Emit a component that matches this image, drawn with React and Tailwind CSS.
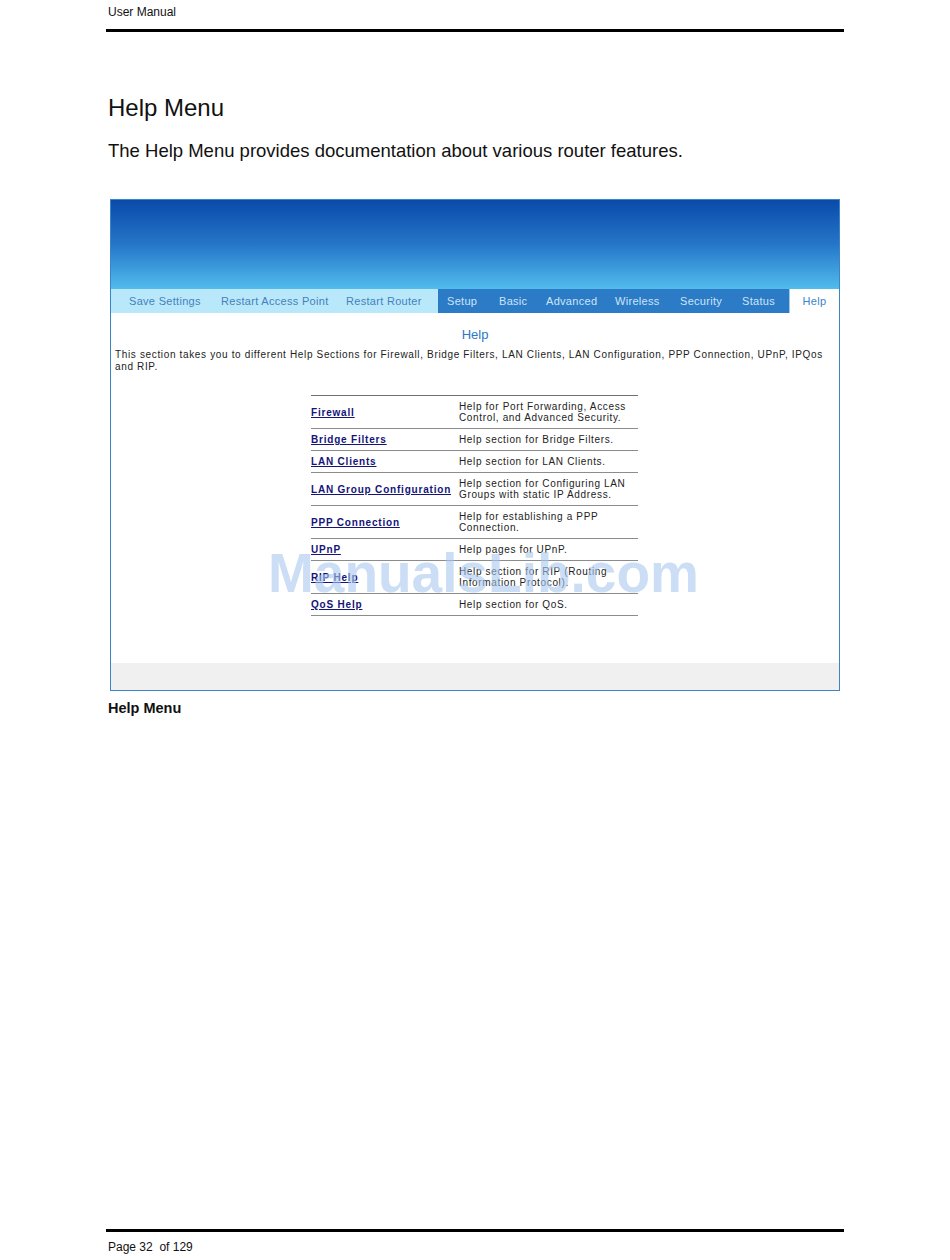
import React from "react";

const leftNav = [
  { label: "Save Settings", w: "w-[100px]", pl: "pl-[18px]" },
  { label: "Restart Access Point", w: "w-[125px]", pl: "pl-[10px]" },
  { label: "Restart Router", w: "w-[102px]", pl: "pl-[10px]" },
];

const mainNav = [
  { label: "Setup", w: "w-[52px]" },
  { label: "Basic", w: "w-[47px]" },
  { label: "Advanced", w: "w-[69px]" },
  { label: "Wireless", w: "w-[65px]" },
  { label: "Security", w: "w-[62px]" },
  { label: "Status", w: "w-[55px]" },
];

const topics = [
  { name: "Firewall", desc: ["Help for Port Forwarding, Access", "Control, and Advanced Security."] },
  { name: "Bridge Filters", desc: ["Help section for Bridge Filters."] },
  { name: "LAN Clients", desc: ["Help section for LAN Clients."] },
  { name: "LAN Group Configuration", desc: ["Help section for Configuring LAN", "Groups with static IP Address."] },
  { name: "PPP Connection", desc: ["Help for establishing a PPP", "Connection."] },
  { name: "UPnP", desc: ["Help pages for UPnP."] },
  { name: "RIP Help", desc: ["Help section for RIP (Routing", "Information Protocol)."] },
  { name: "QoS Help", desc: ["Help section for QoS."] },
];

function RouterScreen() {
  return (
    <div className="ml-[110px] mt-[36px] w-[730px] border border-[#3a84c8] bg-white">
      {/* banner */}
      <div className="h-[89px] bg-gradient-to-b from-[#0a4aaa] via-[#2676c8] to-[#52bcec]" />

      {/* nav bar */}
      <div className="flex h-[24px] text-[11px] tracking-[0.3px] leading-[24px]">
        <div className="flex w-[327px] bg-[#b9e8fb] text-[#4580bd]">
          {leftNav.map((n) => (
            <div key={n.label} className={`${n.w} ${n.pl} whitespace-nowrap`}>
              {n.label}
            </div>
          ))}
        </div>
        <div className="flex flex-1 bg-[#2b7bc6] text-[#cfe4f6]">
          {mainNav.map((n) => (
            <div key={n.label} className={`${n.w} pl-[9px] whitespace-nowrap`}>
              {n.label}
            </div>
          ))}
        </div>
        <div className="w-[50px] border-l border-[#9cc8ec] bg-white text-center text-[#3a84cb]">Help</div>
      </div>

      {/* help content */}
      <div className="h-[350px] px-[4px] pt-[14px]">
        <div className="text-center text-[13px] leading-[16px] text-[#2a78c4]">Help</div>
        <p className="mt-[6px] whitespace-nowrap text-[10px] leading-[12px] tracking-[0.65px] text-[#222]">
          This section takes you to different Help Sections for Firewall, Bridge Filters, LAN Clients, LAN Configuration, PPP Connection, UPnP, IPQos
          <br />
          and RIP.
        </p>

        <table className="ml-[196px] mt-[22px] w-[327px] border-collapse border-t border-[#707070]">
          <tbody>
            {topics.map((t) => (
              <tr key={t.name} className="border-b border-[#8c8c8c]">
                <td className="w-[148px] py-[5px] align-middle text-[10px] leading-[11px]">
                  <a href="#" className="font-bold tracking-[0.8px] text-[#14147a] underline whitespace-nowrap">
                    {t.name}
                  </a>
                </td>
                <td className="py-[5px] align-middle text-[10px] leading-[11px] tracking-[0.65px] text-[#222] whitespace-nowrap">
                  {t.desc.map((l, i) => (
                    <div key={i}>{l}</div>
                  ))}
                </td>
              </tr>
            ))}
          </tbody>
        </table>
      </div>

      <div className="h-[27px] bg-[#f0f0f0]" />
    </div>
  );
}

export default function App() {
  return (
    <div
      className="relative flex h-[1260px] w-[950px] flex-col bg-white text-[#111]"
      style={{ fontFamily: '"Liberation Sans", Arial, sans-serif' }}
    >
      {/* running header */}
      <div className="pl-[108px] pt-[4px] text-[12px] leading-[16px]">User Manual</div>
      <div className="ml-[106px] mt-[9px] h-[3px] w-[738px] bg-black" />

      <h1 className="ml-[108px] mt-[61px] text-[24px] leading-[30px] font-normal">Help Menu</h1>
      <p className="ml-[108px] mt-[16px] text-[18.5px] leading-[24px]">
        The Help Menu provides documentation about various router features.
      </p>

      <RouterScreen />

      <div className="ml-[108px] mt-[8px] text-[14.5px] font-bold leading-[18px]">Help Menu</div>

      {/* running footer */}
      <div className="mt-auto">
        <div className="ml-[106px] h-[3px] w-[738px] bg-black" />
        <div className="ml-[108px] mt-[7px] mb-[5px] text-[12px] leading-[16px]">Page 32&nbsp; of 129</div>
      </div>

      {/* site watermark */}
      <div className="pointer-events-none absolute left-[268px] top-[546px] text-[55px] font-bold leading-none text-[#a8c8f0]/60">
        ManualsLib.com
      </div>
    </div>
  );
}
